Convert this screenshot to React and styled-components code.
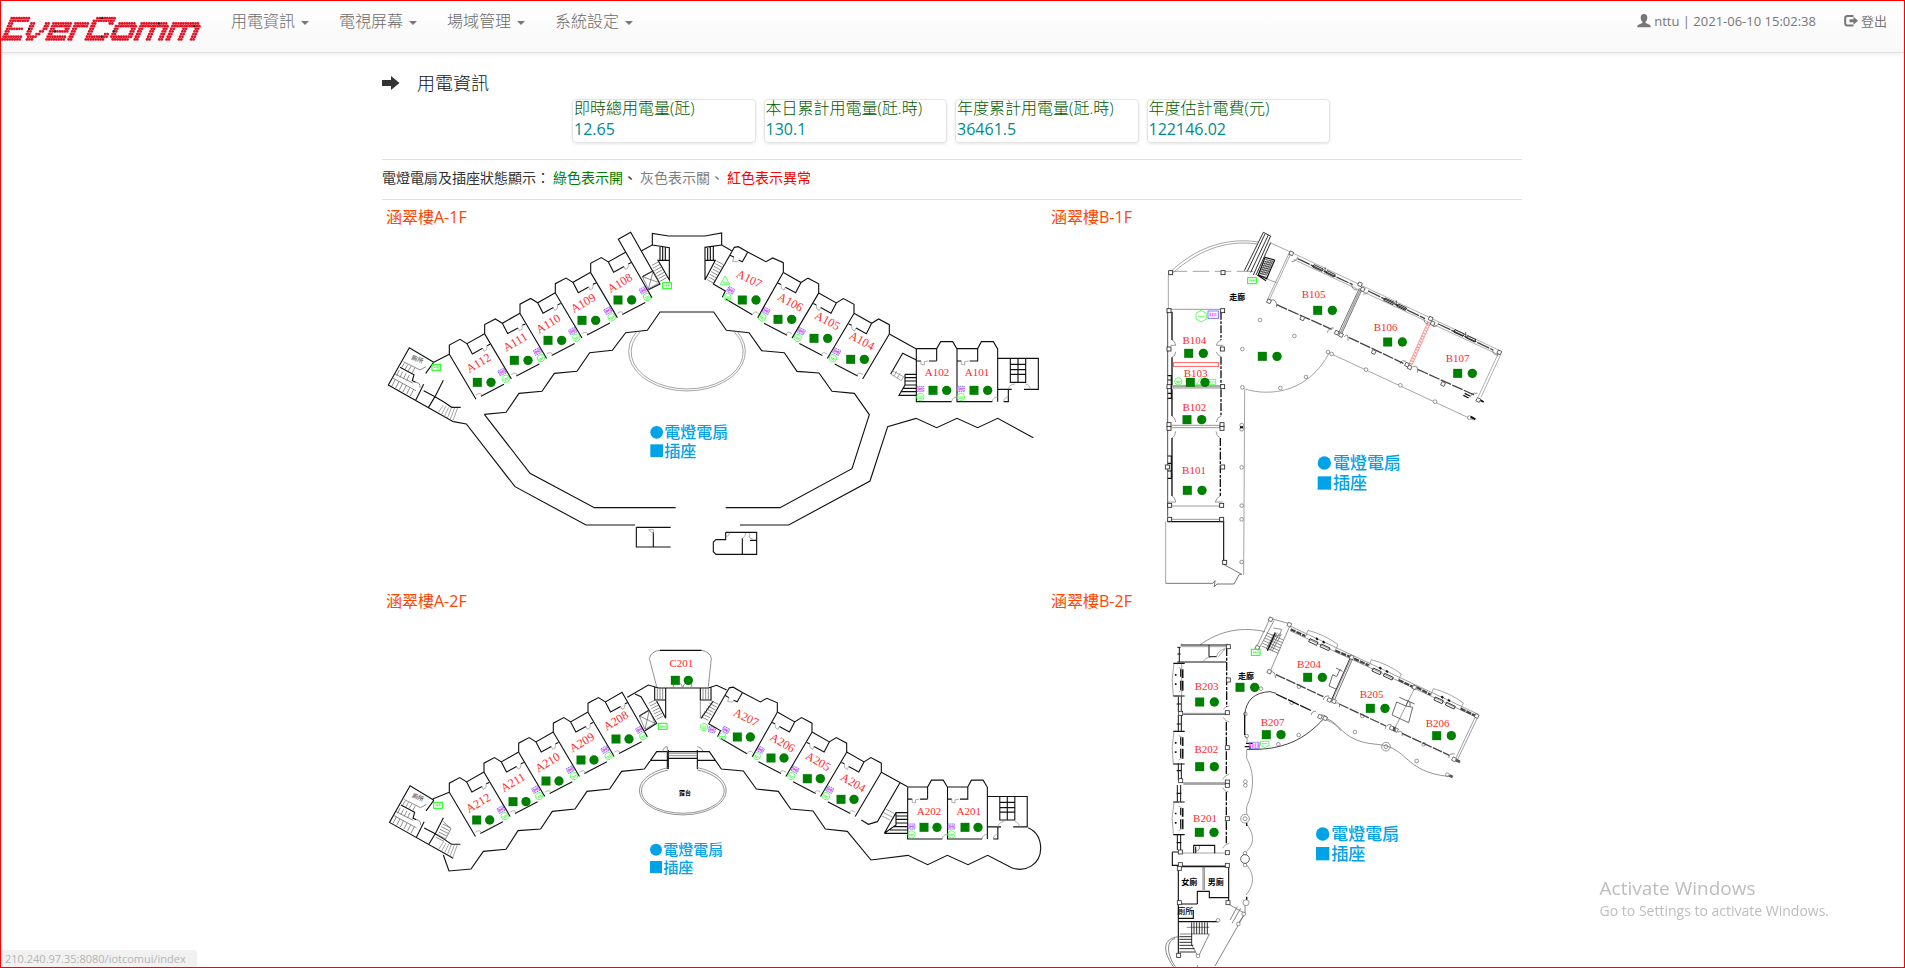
import React from "react";
import styled, { createGlobalStyle } from "styled-components";

const GlobalStyle = createGlobalStyle`
  * { box-sizing: border-box; }
  body {
    margin: 0;
    background: #fff;
    color: #333;
    font-family: "Open Sans", "Noto Sans CJK TC", sans-serif;
    font-size: 14px;
    font-weight: 400;
    line-height: 20px;
  }
`;

const Page = styled.div`
  min-height: 100vh;
  border: 1px solid #f00;
  overflow: hidden;
`;

const Navbar = styled.header`
  display: flex;
  align-items: flex-start;
  height: 52px;
  padding-right: 17px;
  background: linear-gradient(#fff, #f8f8f8);
  border-bottom: 1px solid #e0e0e0;
  box-shadow: 0 1px 5px rgba(0, 0, 0, 0.08);
`;

const Brand = styled.a`
  display: block;
  height: 26px;
  margin: 15px 15px 0 0;
`;

const Menu = styled.nav`
  display: flex;
  flex: 1;
`;

const MenuButton = styled.button`
  display: flex;
  align-items: center;
  gap: 6px;
  height: 40px;
  padding: 0 15px;
  border: 0;
  background: none;
  color: #6a6a6a;
  font: 300 16px/20px "Open Sans", "Noto Sans CJK TC", sans-serif;
  cursor: pointer;
`;

const Caret = styled.span`
  margin-top: 3px;
  border-top: 4px solid #777;
  border-left: 4px solid transparent;
  border-right: 4px solid transparent;
`;

const Account = styled.div`
  display: flex;
  gap: 28px;
  height: 40px;
  color: #777;
  font-size: 13px;
`;

const AccountLink = styled.a`
  display: flex;
  align-items: center;
  gap: 3px;
  color: inherit;
  text-decoration: none;
  svg { flex: none; }
`;

const Container = styled.main`
  max-width: 1141px;
  margin: 0 auto;
  padding-right: 1px;
`;

const TitleRow = styled.div`
  display: flex;
  align-items: center;
  gap: 17px;
  height: 20px;
  margin-top: 20px;
`;

const Title = styled.h1`
  margin: 0;
  color: #111;
  font-size: 18px;
  font-weight: 300;
  line-height: 24px;
`;

const Cards = styled.section`
  display: grid;
  grid-template-columns: repeat(4, 1fr);
  gap: 8px;
  width: 66.5%;
  margin: 6px 0 16px 190px;
`;

const Card = styled.div`
  height: 44px;
  padding-left: 1px;
  border: 1px solid #e4e4e4;
  border-radius: 4px;
  box-shadow: 0 1px 3px rgba(0, 0, 0, 0.1);
  font-size: 16px;
  white-space: nowrap;
`;

const CardLabel = styled.div`
  color: #005a00;
  font-weight: 300;
  line-height: 17px;
`;

const CardValue = styled.div`
  color: #008b8b;
  line-height: 24px;
`;

const StatusLegend = styled.p`
  display: flex;
  gap: 3px;
  height: 41px;
  margin: 0 0 6px;
  padding: 8px 0 11px;
  border-top: 1px solid #ddd;
  border-bottom: 1px solid #ddd;
`;

const Tone = styled.span`
  color: ${(p) => p.$color};
`;

const Floors = styled.section`
  display: grid;
  grid-template-columns: 7fr 5fr;
`;

const Floor = styled.article`
  min-width: 0;
`;

const FloorName = styled.h2`
  margin: 0;
  padding-left: 4px;
  color: #ff4500;
  font-size: 16px;
  font-weight: 400;
  line-height: 23px;
`;

const Plan = styled.svg`
  display: block;
  width: 100%;
  height: auto;
  fill: none;
  stroke: #111;
  stroke-width: 3.4;
  text { stroke: none; }
`;

const RoomLabel = styled.text`
  fill: #ff2a2a;
  font-family: "Liberation Serif", serif;
  font-size: ${(p) => p.$size}px;
  text-anchor: middle;
`;

const KeyLabel = styled.text`
  fill: #00a2e8;
  font-family: "Liberation Sans", "Noto Sans CJK TC", sans-serif;
  font-size: ${(p) => p.$size}px;
  font-weight: 500;
`;

const SpaceLabel = styled.text`
  fill: ${(p) => p.$color || "#000"};
  font-family: "Noto Sans CJK TC", sans-serif;
  font-size: ${(p) => p.$size || 27}px;
  font-weight: ${(p) => p.$weight || 700};
  text-anchor: middle;
`;

const StatusBar = styled.div`
  position: fixed;
  left: 1px;
  bottom: 1px;
  padding: 0 11px 0 4px;
  border-radius: 0 3px 0 0;
  background: #f1f1f1;
  color: #b4b4b4;
  font-size: 11px;
  line-height: 17px;
`;

const Watermark = styled.aside`
  position: fixed;
  right: 76px;
  bottom: 46px;
  color: #bdbdbd;
  font-size: 14px;
  line-height: 22px;
  strong {
    display: block;
    font-size: 19px;
    font-weight: 400;
    line-height: 24px;
  }
`;

const LETTERS = {
  E: ["########", "########", "##      ", "##      ", "####### ", "##      ", "##      ", "########", "########"],
  v: ["", "", "##    ##", "##    ##", "##    ##", "##   ## ", "##  ##  ", " ####   ", " ###    "],
  e: ["", "", "########", "########", "##    ##", "########", "##      ", "########", "########"],
  r: ["", "", "######", "######", "##    ", "##    ", "##    ", "##    ", "##    "],
  C: [" ########", "#########", "##     ##", "##       ", "##       ", "##       ", "##     ##", "#########", "######## "],
  o: ["", "", " ####### ", "#########", "##     ##", "##     ##", "##     ##", "#########", " ####### "],
  m: ["", "", "########### ", "############", "##   ##   ##", "##   ##   ##", "##   ##   ##", "##   ##   ##", "##   ##   ##"],
};

function Logo() {
  const dots = [];
  let col = 0;
  [..."EverComm"].forEach((ch, n) => {
    const rows = LETTERS[ch];
    rows.forEach((row, r) => {
      [...row].forEach((c, i) => {
        if (c !== "#") return;
        const dark = (n * 31 + r * 17 + i * 23) % 47 === 5;
        dots.push(
          <circle
            key={`${n}-${r}-${i}`}
            cx={1.5 + (col + i) * 2.45 + (8 - r) * 1.15}
            cy={2.2 + r * 2.65}
            r="1.38"
            fill={dark ? "#222" : "#e60f23"}
          />
        );
      });
    });
    col += Math.max(...rows.map((r) => r.length)) + 1;
  });
  return (
    <svg width="200" height="26" viewBox="0 0 200 26" role="img" aria-label="EverComm">
      {dots}
    </svg>
  );
}

/* A green lit pair: a square for sockets, a circle for lights and fans. */
function Pair({ x, y, gap = 41 }) {
  return (
    <g fill="#008000" stroke="none">
      <rect x={x - 13.5} y={y - 13.5} width="27" height="27" />
      <circle cx={x + gap} cy={y} r="14" />
    </g>
  );
}

function Room({ name, at, lit, gap, turn = 0, size = 36 }) {
  return (
    <g>
      <RoomLabel $size={size} transform={`translate(${at[0]} ${at[1]}) rotate(${turn})`} y="11">
        {name}
      </RoomLabel>
      <Pair x={lit[0]} y={lit[1]} gap={gap} />
    </g>
  );
}

function Key({ x, y, r, text, size, step }) {
  return (
    <g>
      <g fill="#00a2e8" stroke="none">
        <circle cx={x} cy={y} r={r} />
        <rect x={x - r} y={y + step - r} width={r * 2} height={r * 2} />
      </g>
      <KeyLabel $size={size} x={text} y={y + 17}>電燈電扇</KeyLabel>
      <KeyLabel $size={size} x={text} y={y + step + 18}>插座</KeyLabel>
    </g>
  );
}

const Exit = ({ x, y }) => (
  <g stroke="#1f1">
    <rect x={x - 13} y={y - 9} width="26" height="18" strokeWidth="3" />
    <path d={`M${x - 8} ${y}h17`} strokeWidth="5" strokeDasharray="4 1" opacity=".7" />
  </g>
);

const Panel = ({ x, y, turn = 0 }) => (
  <g transform={`translate(${x} ${y}) rotate(${turn})`}>
    <rect x="-10" y="-8" width="20" height="16" fill="#f3dcff" stroke="#6a60ff" strokeWidth="2.5" strokeDasharray="4 2" />
    <path d="M-7 -4L7 4M7 -4L-7 4M-8 0H8" stroke="#e65bff" strokeWidth="2.6" />
  </g>
);

const Sensor = ({ x, y, turn = 0 }) => (
  <g transform={`translate(${x} ${y}) rotate(${turn})`} stroke="#4dff4d" strokeWidth="2.5">
    <circle r="11" />
    <path d="M-8 0H8M-6 4H6" />
  </g>
);

/* One classroom of the slanted wing, drawn from its outer top corner. */
const WingCell = () => (
  <g>
    <path d="M0 0V-28L32 -45L53 -32L106 -62M53 -32L69 -1L100 -18M122 -30L113 -26M0 0L80 135M95 126L164 90" />
    <path d="M100 -18L104 -9L112 -14L113 -26M80 122Q94 112 98 124" stroke="#888" strokeWidth="2" />
    <Panel x={158} y={53} turn={-28} />
    <Sensor x={169} y={73} turn={-28} />
  </g>
);

const WIDE_CELL =
  "M0 0V-29L-32 -43L-52 -32L-107 -61L-135 -77L-147 -75L-210 35L-174 56L-183 75M0 0L-77 136M-107 -60L-123 -32L-134 -37M-161 -52L-148 -45M-173 80L-93 127";

const WideCell = () => (
  <g>
    <path d={WIDE_CELL} />
    <path d="M-148 -45l-4 12l14 2l4 -6M-93 127Q-84 112 -74 124" stroke="#888" strokeWidth="2" />
    <Panel x={-158} y={54} turn={28} />
    <Sensor x={-168} y={74} />
  </g>
);

/* The straight end block with two classrooms and a stair hall. */
const EndBlock = () => (
  <g>
    <path d="M0 0V158H106M0 -1H61M61 35V-1L73 -22H109L122 0V158H228M122 -1H184V36H160M122 36H135M61 36H38M0 36H14M184 -1L195 -22H231L244 0V158M244 28H366V121H323M244 121H286M276 121V158H262M282 28V100H328V28M305 28V100M282 46H328M282 62H328M282 76H328" />
    <path d="M14 36v10l10 2v-10l12 -2M135 36v10l10 2v-10l12 -2M106 158Q108 144 122 144M228 158Q230 144 244 144M262 158Q264 144 276 144M276 121Q280 105 296 105M328 105Q340 106 342 121" stroke="#888" strokeWidth="2" />
    <Panel x={12} y={120} />
    <Sensor x={12} y={144} />
    <Panel x={134} y={120} />
    <Sensor x={134} y={144} />
  </g>
);

const Washroom = () => (
  <g>
    <path d="M161 427L88 383L25 495L220 605M161 427L137 460M60 442L102 464L97 482L107 487M131 493L107 541M131 512L165 530L145 563M190 481L165 530L193 547L215 562H242" />
    <path
      d="M70 425l50 25l18 -10M73 429l-8 14M83 434l-8 14M93 439l-8 14M104 444l-8 16M58 450l-8 17M68 455l-8 17M78 460l-8 17M88 465l-8 17M45 462l53 27M38 474l70 38M46 478l-10 20M57 484l-10 20M68 490l-10 20M79 496l-10 20M90 502l-10 20M101 508l-10 20M107 487Q122 488 120 503"
      stroke="#555"
      strokeWidth="2"
    />
    <path d="M190 555L175 578M198 558L184 584M206 562L193 590M214 563L202 595M224 563L210 600M233 563L218 604" stroke="#777" strokeWidth="2" />
    <SpaceLabel $color="#555" $size={18} $weight={500} transform="translate(110 424) rotate(22)">廁所</SpaceLabel>
  </g>
);

const LEFT_STEPS = [0, 1, 2, 3, 4];
const RIGHT_STEPS = [0, 1, 2];

const rungs = (x, y, dx, dy, w, h, n) =>
  Array.from({ length: n }, (_, i) => `M${x + dx * i} ${y + dy * i}l${w} ${h}`).join("");

function PlanA1() {
  return (
    <Plan viewBox="0 0 1995 1083" role="img" aria-label="涵翠樓A-1F 平面圖">
      <g transform="translate(-6 -27)">
        <Washroom />
        <path d="M220 605L259 612L405 800L618 915H765M161 427L208 403" />
        {LEFT_STEPS.map((i) => (
          <g key={i} transform={`translate(${208 + 106 * i} ${403 - 61.3 * i})`}>
            <WingCell />
          </g>
        ))}
        <path d="M816 233L715 58L752 37L840 192L805 209M785 92L817 75V40L866 48H975L1025 39V75L1055 92M787 170L820 152M817 75L868 83V180L834 121H868" />
        <path d="M840 80V121M848 80V121M856 82V121M975 180V82L1025 75M975 180L1006 121H975M983 82V121M991 80V121M1000 79V121" />
        <path d={`M787 170L820 152L838 188L805 207ZM787 170L838 188M820 152L805 207${rungs(816, 136, 4, 8, 20, -11, 7)}${rungs(1030, 134, -4, 8, -20, -11, 8)}`} stroke="#555" strokeWidth="2" />
        <path d="M313 583L450 760L643 863H887M313 583L378 577L417 520L486 514L523 460L591 454L629 398L697 391L737 338L802 331L840 276H1001L1039 331L1107 338L1145 392L1213 398L1251 454L1317 459L1356 514L1423 520L1468 584L1416 746L1200 863H1037M1080 915H1226L1470 783L1523 620L1608 595L1670 623L1731 595L1793 623L1853 595L1960 653" />
        <path d="M772 333A175 118 0 1 0 1070 333M781 335A168 111 0 1 0 1062 335" stroke="#777" strokeWidth="2" />
        <path d="M769 922H872M769 922V981H872M820 937V981M1037 937H1130V1003H1008L1000 995V966L1008 959H1037V937M1087 955V1003M1110 961H1130" />
        <path d="M806 929h14v12zM1037 950q10 0 12 -12M1087 955q10 -4 10 -16M1108 940v12l10 6" stroke="#888" strokeWidth="2" />
        <Exit x={861} y={197} />
        <Exit x={169} y={442} />
        <g transform="translate(930 0)">
          {RIGHT_STEPS.map((i) => (
            <g key={i} transform={`translate(${598 - 106 * i} ${342 - 61.3 * i}) scale(-1 1)`}>
              <WingCell />
            </g>
          ))}
          <g transform="translate(280 157)"><WideCell /></g>
          <path d="M105 168L91 194H120Z M98 188h16" stroke="#4f4" strokeWidth="2.5" />
          <path d="M598 342L679 387M679 420L638 400L602 462M645 463V495L627 526H679M645 463H679M645 473H679M645 483H679M645 495H679M640 505H679M634 515H679" />
          <path d="M607 452L640 470M602 462L634 482L642 468M612 468l8 -14M622 474l8 -14" stroke="#777" strokeWidth="2" />
          <g transform="translate(679 387)"><EndBlock /></g>
          <Room name="A107" at={[177, 177]} lit={[157, 240]} turn={26} />
          <Room name="A106" at={[301, 247]} lit={[264, 298]} turn={28} />
          <Room name="A105" at={[412, 303]} lit={[372, 355]} turn={28} />
          <Room name="A104" at={[515, 363]} lit={[482, 418]} turn={28} />
          <Room name="A102" at={[741, 458]} lit={[729, 511]} size={33} />
          <Room name="A101" at={[861, 458]} lit={[852, 511]} size={33} />
        </g>
        <Room name="A108" at={[720, 190]} lit={[714, 240]} turn={-31} />
        <Room name="A109" at={[610, 250]} lit={[606, 301]} turn={-31} />
        <Room name="A110" at={[505, 312]} lit={[504, 361]} turn={-31} />
        <Room name="A111" at={[406, 367]} lit={[403, 421]} turn={-31} />
        <Room name="A112" at={[296, 430]} lit={[292, 487]} turn={-31} />
        <Key x={830} y={637} r={19} step={55} text={853} size={48} />
      </g>
    </Plan>
  );
}

function PlanA2() {
  return (
    <Plan viewBox="0 0 1995 1062" role="img" aria-label="涵翠樓A-2F 平面圖">
      <g transform="translate(-6 -69)">
        <g transform="translate(4 212) scale(.98)"><Washroom /></g>
        <path d="M158 627L208 607M190 795L207 843L273 837L310 784L378 778L414 722L482 717L517 664L585 657L621 604L689 597L725 544L793 537L830 485H862V537M810 511H865" />
        {LEFT_STEPS.map((i) => (
          <g key={i} transform={`translate(${208 + 104 * i} ${607 - 60 * i}) scale(.98)`}>
            <WingCell />
          </g>
        ))}
        <path d="M727 308L802 440M742 322L805 285L836 294H985L1010 286L1040 300M765 312L783 320L830 400L795 422M778 378L808 360M824 290V330H857M857 294V385L830 333M961 294V330H993V290M865 485H952M865 505H952M865 480V537M952 480V537M840 181H965M1000 333L963 385" />
        <path d="M830 290L808 205Q815 182 840 181M965 181Q990 185 994 205L985 290M961 330V385M865 490H952M865 497H952M865 533A130 73 0 1 0 952 533M865 540A124 67 0 1 0 952 540M848 485Q850 470 862 470V485M952 470Q966 472 970 485M898 278q8 5 10 16q2 -12 10 -16M880 280v14M935 280v14" stroke="#777" strokeWidth="2.4" />
        <path d={`M832 294V330M840 294V330M848 294V330M969 294V330M977 294V330M985 294V330M778 378L808 360L825 400L795 418ZM778 378L825 400M808 360L795 418M190 695L213 716L195 750L215 764${rungs(806, 340, 4, 8, 20, -10, 7)}${rungs(1015, 343, -5, 8, -22, -11, 7)}${rungs(188, 702, -4, 8, 24, 12, 6)}`} stroke="#555" strokeWidth="2" />
        <Exit x={848} y={409} />
        <Exit x={174} y={646} />
        <Sensor x={972} y={411} />
        <Panel x={996} y={419} turn={10} />
        <g transform="translate(930 0)">
          {RIGHT_STEPS.map((i) => (
            <g key={i} transform={`translate(${574 - 104 * i} ${547 - 60 * i}) scale(-.98 .98)`}>
              <WingCell />
            </g>
          ))}
          <g transform="translate(262 367) scale(.98)"><WideCell /></g>
          <path d="M22 485H58L94 537L160 543L199 597L265 604L302 657L369 663L406 717L472 724L543 810L654 796L713 824L772 796L834 824L893 796L965 833C1005 848 1052 825 1052 775C1052 745 1040 725 1015 713M22 511H75M574 547L653 590M630 578L562 695L535 703L514 690M583 730L618 668H653M618 668V705L583 730M618 678H653M618 688H653M618 699H653M612 710H653M600 720H653M583 730H653" />
          <path d="M583 655L612 670M578 666L608 682M572 676L600 690" stroke="#777" strokeWidth="2" />
          <g transform="translate(653 592) scale(.98)"><EndBlock /></g>
          <Room name="A207" at={[168, 383]} lit={[142, 441]} gap={39} turn={26} />
          <Room name="A206" at={[277, 459]} lit={[243, 504]} gap={39} turn={30} />
          <Room name="A205" at={[384, 515]} lit={[352, 566]} gap={39} turn={30} />
          <Room name="A204" at={[489, 579]} lit={[453, 628]} gap={39} turn={30} />
          <Room name="A202" at={[717, 664]} lit={[702, 712]} gap={39} size={33} />
          <Room name="A201" at={[836, 664]} lit={[825, 712]} gap={39} size={33} />
        </g>
        <SpaceLabel x={915} y={614} $size={18}>露台</SpaceLabel>
        <Room name="C201" at={[904, 221]} lit={[886, 271]} gap={39} size={33} />
        <Room name="A208" at={[708, 393]} lit={[708, 447]} gap={39} turn={-31} />
        <Room name="A209" at={[606, 458]} lit={[603, 510]} gap={39} turn={-31} />
        <Room name="A210" at={[503, 518]} lit={[498, 573]} gap={39} turn={-31} />
        <Room name="A211" at={[399, 578]} lit={[399, 635]} gap={39} turn={-31} />
        <Room name="A212" at={[295, 640]} lit={[290, 690]} gap={39} turn={-31} />
        <Key x={828} y={779} r={18} step={52} text={850} size={45} />
      </g>
    </Plan>
  );
}

const Posts = ({ points, r = 5.5, stroke = "#666" }) => (
  <g stroke={stroke} strokeWidth="2" fill="#fff">
    {points.map(([x, y]) => <circle key={`${x}-${y}`} cx={x} cy={y} r={r} />)}
  </g>
);

const Columns = ({ points, turn = 0, size = 12, stroke = "#222" }) => (
  <g stroke={stroke} strokeWidth="2.5" fill="#fff">
    {points.map(([x, y]) => (
      <rect key={`${x}-${y}`} x={-size / 2} y={-size / 2} width={size} height={size} transform={`translate(${x} ${y}) rotate(${turn})`} />
    ))}
  </g>
);

function PlanB1() {
  return (
    <Plan viewBox="0 0 1425 1083" role="img" aria-label="涵翠樓B-1F 平面圖">
      <g transform="translate(309 -27)">
        <path d="M62 155C130 90 220 50 325 66M70 158C138 96 222 58 322 72M55 165V268M360 68L424 97M417 100L352 240M345 175L380 188M281 1065L284 510M47 904V1090M277 505C370 535 480 510 538 398M545 402L970 600" stroke="#777" strokeWidth="2" />
        <path d="M62 154H330" strokeDasharray="50 16" stroke="#777" strokeWidth="2" />
        <path d="M283 152L340 37L362 48L310 165M292 154L345 42M302 157L355 45M318 165L362 68" strokeWidth="2.6" />
        <path d="M345 112L374 120L350 176L325 165Z M322 165L348 182" />
        <path d={rungs(346, 118, -2.4, 6, 24, 6, 9)} strokeWidth="2" />
        <path d={rungs(343, 122, 5, 0, -18, 42, 6)} strokeWidth="1.5" />
        {/* west column of rooms */}
        <path d="M50 268H222M66 497H212M66 504H212M66 616H212M66 623H212M66 858H220M60 898H220" stroke="#666" strokeWidth="2" />
        <path d="M53 275V890" strokeWidth="2.2" />
        <path d="M66 500H212" stroke="#aaa" strokeWidth="5" />
        <path d="M66 275V360M66 412V495M66 508V588M66 654V828" strokeWidth="4" />
        <path d="M213 275V360M213 410V495M213 508V588M211 654V828" strokeWidth="4" strokeDasharray="24 5 8 4" />
        <path d="M53 467H64V535H53M53 480H64M53 520H64M53 708H64V775H53M53 730H64M53 753H64M52 905H221V1030" />
        <path d="M47 1090H188L195 1082L193 1100L201 1092H252L268 1063L275 1063L221 1033" stroke="#444" strokeWidth="2.2" />
        <path d="M66 360Q76 364 77 376H62M66 412Q76 408 77 396M213 360Q200 366 199 376H220M213 410Q202 406 199 396M66 588Q76 592 77 606M213 588Q201 592 199 606M66 654Q76 650 77 634M211 654Q200 650 198 634M66 828Q76 832 77 846H52M211 828Q198 834 196 846H218" stroke="#666" strokeWidth="2" />
        <Columns points={[[62, 158], [219, 158], [57, 272], [218, 272], [57, 387], [217, 387], [57, 500], [218, 500], [57, 614], [57, 625], [216, 614], [216, 625], [59, 856], [215, 856], [59, 898], [215, 898], [52, 741], [218, 741], [224, 1027]]} />
        <Posts points={[[330, 300], [433, 348], [277, 387], [277, 502], [391, 504], [468, 471], [534, 396], [545, 402], [275, 615], [275, 628], [275, 742], [275, 857], [275, 898], [275, 1026], [648, 449], [751, 496], [855, 545], [958, 593]]} />
        <path d="M270 622h10M962 590l14 8M985 537l16 9" strokeWidth="6" />
        <rect x="70" y="428" width="136" height="11" stroke="#f44" strokeWidth="2.5" />
        {/* east wing */}
        <path d="M424 97L1050 392M430 118L1045 404" stroke="#888" strokeWidth="2" />
        <path d="M443 116L608 194M655 213L825 296M865 312L1030 390" strokeWidth="4" stroke="#444" strokeDasharray="40 3" />
        <path d="M380 254L545 328M596 352L760 430M803 448L975 526" strokeWidth="4" stroke="#444" strokeDasharray="34 4" />
        <path d="M492 134L520 147L516 154L488 141ZM532 152L556 164L552 171L528 159ZM705 234L733 247L729 254L701 241ZM745 252L770 264L766 271L741 259ZM915 329L943 342L939 349L911 336ZM953 347L978 359L974 366L949 354Z" strokeWidth="2.5" />
        <path d="M525 142v18M739 241v18M947 336v18" strokeWidth="2" />
        <path d="M628 205L565 340M636 208L574 344" stroke="#555" strokeWidth="2.5" />
        <path d="M632 206L570 342" stroke="#aaa" strokeWidth="5" />
        <path d="M834 305L777 432M842 308L785 436" stroke="#f55" strokeWidth="2" />
        <path d="M838 306L781 434" stroke="#f88" strokeWidth="5" strokeDasharray="4 5" />
        <path d="M1053 402L993 532M1045 400L985 530M421 104L358 240" stroke="#888" strokeWidth="2" />
        <path d="M425 125Q440 124 443 110M605 194Q606 210 622 210M640 222Q655 222 657 210M822 296Q822 312 836 312M848 320Q864 320 866 308M1028 390Q1028 404 1044 406M362 240Q382 236 380 262M532 338Q536 322 552 324M583 350Q596 336 594 362M750 432Q754 418 768 424M790 440Q806 434 802 458M960 532Q964 516 982 520" stroke="#555" strokeWidth="2" />
        <Columns turn={25} size={11} points={[[424, 100], [630, 193], [638, 208], [842, 296], [848, 310], [1048, 397], [357, 244], [560, 338], [573, 345], [771, 434], [779, 442], [985, 540], [457, 295], [671, 396], [879, 492]]} stroke="#555" />
        <path d="M944 520l16 8M940 526l16 8" strokeWidth="4" />
        <Exit x={306} y={182} />
        <path d="M138 280L153 271L169 280V297L153 306L138 297ZM144 289H163" stroke="#4f4" strokeWidth="2.5" />
        <rect x="174" y="273" width="32" height="22" stroke="#66f" strokeWidth="2.5" />
        <path d="M179 284H202" stroke="#d3f" strokeWidth="11" strokeDasharray="4 3" opacity=".65" />
        <Sensor x={85} y={484} />
        <path d="M138 494L154 472L168 494ZM174 478H197V494H174ZM178 486h16" stroke="#4f4" strokeWidth="2.5" />
        <SpaceLabel x={262} y={241} $size={24}>走廊</SpaceLabel>
        <Room name="B104" at={[133, 361]} lit={[116, 400]} gap={44} size={33} />
        <Room name="B103" at={[137, 459]} lit={[121, 487]} gap={44} size={33} />
        <Room name="B102" at={[133, 561]} lit={[111, 599]} gap={44} size={33} />
        <Room name="B101" at={[132, 752]} lit={[112, 811]} gap={44} size={33} />
        <Room name="B105" at={[491, 222]} lit={[503, 271]} gap={44} size={33} />
        <Room name="B106" at={[707, 322]} lit={[713, 366]} gap={44} size={33} />
        <Room name="B107" at={[923, 414]} lit={[923, 460]} gap={44} size={33} />
        <Pair x={337} y={409} gap={44} />
        <Key x={523} y={729} r={20} step={60} text={549} size={51} />
      </g>
    </Plan>
  );
}

const WestBay = ({ y }) => (
  <g transform={`translate(0 ${y})`}>
    <path d="M88 0H72Q62 48 70 98H88" stroke="#777" strokeWidth="2" />
    <path d="M70 0H104M70 98H104M92 18V40M92 52V80" />
    <path d="M98 18V44M98 52V82" strokeWidth="5" />
    <path d="M77 32v5M77 60v5" strokeWidth="5" />
    <path d="M86 12L98 20M86 86L98 78" stroke="#777" strokeWidth="2" />
  </g>
);

const NorthBay = ({ x, y }) => (
  <g transform={`translate(${x} ${y})`}>
    <path d="M0 18L8 -3Q58 10 98 40L88 60" stroke="#777" strokeWidth="2" />
    <path d="M14 22L38 33L34 42L10 31ZM48 38L74 50L70 58L44 46Z" strokeWidth="2.5" />
    <path d="M32 20l6 5M52 30l6 5" strokeWidth="6" />
  </g>
);

function PlanB2() {
  return (
    <Plan viewBox="0 0 1425 1062" role="img" aria-label="涵翠樓B-2F 平面圖">
      <g transform="translate(309 -39)">
        <path d="M150 135C210 90 280 80 345 95M360 55L422 72L360 215M360 55L318 145M372 62L326 148M370 84L395 88L388 108L362 104" stroke="#777" strokeWidth="2.4" />
        <path d={rungs(350, 98, -3, 8, 50, 22, 6)} stroke="#555" strokeWidth="2" />
        <path d={rungs(376, 96, 6, 2, -28, 52, 4)} stroke="#555" strokeWidth="2" />
        <path d="M376 98L352 152" strokeWidth="4" />
        {/* west column */}
        <path d="M92 135H236M88 142V186M82 142H92M82 186H228M82 162H92M177 135V170H200M85 290V336M94 290V336M85 345V394M94 345V394M85 490V540M94 490V540M82 555V605M92 555V605M82 705V750M92 705V750" strokeWidth="3" />
        <path d="M80 312H94M80 372H94M80 512H94M80 580H94M80 728H94" />
        <path d="M95 130V140H228M95 188V336M160 186Q165 172 182 172M200 168Q206 150 226 146L205 170M100 340H230M97 548H235M95 759H235M220 328Q226 318 238 318M220 352Q226 365 238 366M218 538Q224 526 238 522M218 562Q224 576 236 576M218 745Q224 732 238 730" stroke="#777" strokeWidth="2" />
        <path d="M100 343H228M100 552H238" strokeWidth="3" stroke="#555" />
        <path d="M230 142V320M229 366V522M229 576V730" strokeWidth="4" strokeDasharray="26 5 9 4" />
        <WestBay y={190} />
        <WestBay y={394} />
        <WestBay y={606} />
        <path d="M131 760V736H194V760M137 740V760M67 756V796H98M67 756H98M85 800H236M85 800V1074M236 800V910M142 912V874H178V893H236M85 912H142M85 955H130V930M85 965H205" />
        <path d="M148 738Q152 750 137 754M88 797H236M159 800V870M163 800V870M110 982H178M178 1002L145 1070L125 1035M90 1002H178M195 1098L282 945M240 915L285 940L262 975M262 920L240 960M272 925L246 970M85 1010C40 1015 35 1050 70 1100M75 1016C50 1020 48 1060 76 1100M285 915V940M142 1096v10" stroke="#666" strokeWidth="2.4" />
        <path d="M132 967V1002M140 967V1002M148 967V1002M156 967V1002M164 967V1002M172 967V1002M88 1010H125M88 1018H125M88 1027H125M88 1036H130M88 1046H134M88 1056H136M125 967V1035" strokeWidth="2.6" />
        <Columns points={[[235, 140], [235, 240], [92, 340], [232, 338], [92, 542], [232, 443], [232, 546], [232, 556], [91, 756], [232, 656], [232, 758], [91, 794], [232, 796], [88, 908], [234, 908], [88, 805], [86, 1066]]} stroke="#333" />
        <path d="M290 475C315 520 312 570 290 620V645M289 672C316 705 312 735 288 755M290 795C315 825 312 855 288 885M290 450V475" stroke="#777" strokeWidth="2.2" />
        <path d="M290 890V910M290 668v10M288 430H308M284 440H300V448" strokeWidth="4" />
        <Posts points={[[286, 545], [286, 556], [204, 961], [144, 1068], [281, 942], [265, 972], [285, 760], [285, 795], [333, 266], [447, 260], [425, 308], [446, 405], [385, 433], [290, 408], [286, 342], [615, 396], [637, 348], [821, 433], [800, 483], [892, 524]]} />
        <Posts points={[[285, 656], [708, 440]]} r={13} />
        <Posts points={[[285, 656], [708, 440]]} r={6} />
        <Posts points={[[285, 777]]} r={13} stroke="#222" />
        <Posts points={[[288, 908]]} r={9} />
        {/* curved hall and east wing */}
        <path d="M284 405V345" strokeWidth="4" />
        <path d="M284 345Q290 278 360 275L378 280M290 448C400 452 465 418 522 355" strokeWidth="2.4" />
        <path d="M378 282L484 332" strokeWidth="4" strokeDasharray="36 4" />
        <path d="M525 355C560 362 570 400 620 420S700 425 740 452S800 522 905 530M284 408Q295 412 290 428M530 360Q560 372 572 392" stroke="#777" strokeWidth="2.4" />
        <path d="M420 78L985 343M420 92L980 352M605 172L545 305M795 262L732 390M985 348L922 480M978 346L916 478" stroke="#888" strokeWidth="2.4" />
        <path d="M422 88L466 108M556 152L604 172M612 176L656 196M746 240L792 262M800 262L842 284M932 326L978 348" strokeWidth="7" stroke="#444" strokeDasharray="16 3" />
        <path d="M378 224L520 290M568 312L708 378M756 400L898 466" strokeWidth="4" stroke="#444" strokeDasharray="30 4" />
        <path d="M600 175L542 305" stroke="#333" strokeWidth="3" />
        <path d="M608 176L550 308" stroke="#333" strokeWidth="2" />
        <NorthBay x={466} y={94} />
        <NorthBay x={656} y={182} />
        <NorthBay x={842} y={269} />
        <path d="M558 204L578 214M570 208L560 230L548 224L537 258L560 268M748 292L794 312M775 300L768 318L740 306L726 345L776 368L788 322L768 318M780 305V320" stroke="#555" strokeWidth="2.6" />
        <path d="M484 345Q486 332 498 334M512 345Q530 345 532 355M358 215Q378 212 376 234M520 300Q522 286 538 288M556 310Q572 304 568 322M706 386Q708 372 724 374M744 396Q760 390 756 408M896 474Q898 458 914 462" stroke="#555" strokeWidth="2" />
        <Columns turn={25} size={11} points={[[362, 58], [418, 74], [358, 215], [538, 300], [552, 304], [725, 384], [738, 390], [912, 478], [980, 348], [510, 350], [525, 355], [322, 143], [605, 172], [793, 262]]} stroke="#666" />
        <path d="M898 526l10 5M918 480l12 6M733 380v14" strokeWidth="8" stroke="#555" />
        <Exit x={317} y={157} />
        <path d="M298 437H328" stroke="#e3f" strokeWidth="15" strokeDasharray="5 3" opacity=".65" />
        <path d="M298 427H328V446H298Z" stroke="#66f" strokeWidth="2" />
        <path d="M331 424H357V436L344 443L331 436ZM335 431H353" stroke="#4f4" strokeWidth="2.5" />
        <SpaceLabel x={288} y={236} $size={24}>走廊</SpaceLabel>
        <SpaceLabel x={118} y={856} $size={24}>女廁</SpaceLabel>
        <SpaceLabel x={197} y={856} $size={24}>男廁</SpaceLabel>
        <SpaceLabel x={106} y={942} $size={24} $weight={500}>廁所</SpaceLabel>
        <Room name="B204" at={[477, 193]} lit={[473, 232]} gap={44} size={33} />
        <Room name="B205" at={[665, 282]} lit={[661, 325]} gap={44} size={33} />
        <Room name="B206" at={[863, 370]} lit={[860, 407]} gap={44} size={33} />
        <Room name="B203" at={[170, 258]} lit={[149, 306]} gap={44} size={33} />
        <Room name="B202" at={[169, 448]} lit={[149, 500]} gap={44} size={33} />
        <Room name="B201" at={[165, 654]} lit={[148, 697]} gap={44} size={33} />
        <Room name="B207" at={[368, 367]} lit={[349, 404]} gap={44} size={33} />
        <Pair x={270} y={262} gap={44} />
        <Key x={518} y={702} r={20} step={59} text={544} size={51} />
      </g>
    </Plan>
  );
}

const MENU = ["用電資訊", "電視屏幕", "場域管理", "系統設定"];

const READINGS = [
  { label: "即時總用電量(瓩)", value: "12.65" },
  { label: "本日累計用電量(瓩.時)", value: "130.1" },
  { label: "年度累計用電量(瓩.時)", value: "36461.5" },
  { label: "年度估計電費(元)", value: "122146.02" },
];

const FLOORS = [
  { name: "涵翠樓A-1F", Drawing: PlanA1 },
  { name: "涵翠樓B-1F", Drawing: PlanB1 },
  { name: "涵翠樓A-2F", Drawing: PlanA2 },
  { name: "涵翠樓B-2F", Drawing: PlanB2 },
];

export default function App() {
  return (
    <>
      <GlobalStyle />
      <Page>
        <Navbar>
          <Brand href="#"><Logo /></Brand>
          <Menu>
            {MENU.map((item) => (
              <MenuButton key={item} type="button">
                {item}
                <Caret />
              </MenuButton>
            ))}
          </Menu>
          <Account>
            <AccountLink href="#">
              <svg width="14" height="14" viewBox="0 0 14 14" fill="#777">
                <path d="M7 0C4.700 0 3.600 1.600 3.700 3.800C3.800 5.600 4.500 7 5.400 7.800V9.100C3.500 10.100 0.300 10.800 0.300 12.400V13.300H13.700V12.400C13.700 10.800 10.500 10.100 8.600 9.100V7.800C9.500 7 10.200 5.600 10.300 3.800C10.400 1.600 9.300 0 7 0Z" />
              </svg>
              nttu | 2021-06-10 15:02:38
            </AccountLink>
            <AccountLink href="#">
              <svg width="14" height="14" viewBox="0 0 14 14">
                <path d="M9.500 2H3.500Q1.200 2 1.200 4.200V9.300Q1.200 11.500 3.500 11.500H9.500" fill="none" stroke="#777" strokeWidth="2" />
                <path d="M9.500 2.800L14 6.800L9.500 10.800V8.300H5.500V5.300H9.500Z" fill="#777" />
              </svg>
              登出
            </AccountLink>
          </Account>
        </Navbar>
        <Container>
          <TitleRow>
            <svg width="18" height="16" viewBox="0 0 18 16" fill="#333">
              <path d="M0 5H9V1L17.500 8L9 15V11H0Z" />
            </svg>
            <Title>用電資訊</Title>
          </TitleRow>
          <Cards>
            {READINGS.map((r) => (
              <Card key={r.label}>
                <CardLabel>{r.label}</CardLabel>
                <CardValue>{r.value}</CardValue>
              </Card>
            ))}
          </Cards>
          <StatusLegend>
            <span>電燈電扇及插座狀態顯示：</span>
            <span><Tone $color="#008000">綠色表示開</Tone>、</span>
            <Tone $color="#808080">灰色表示關、</Tone>
            <Tone $color="#f00">紅色表示異常</Tone>
          </StatusLegend>
          <Floors>
            {FLOORS.map(({ name, Drawing }) => (
              <Floor key={name}>
                <FloorName>{name}</FloorName>
                <Drawing />
              </Floor>
            ))}
          </Floors>
        </Container>
      </Page>
      <Watermark>
        <strong>Activate Windows</strong>
        Go to Settings to activate Windows.
      </Watermark>
      <StatusBar>210.240.97.35:8080/iotcomui/index</StatusBar>
    </>
  );
}
